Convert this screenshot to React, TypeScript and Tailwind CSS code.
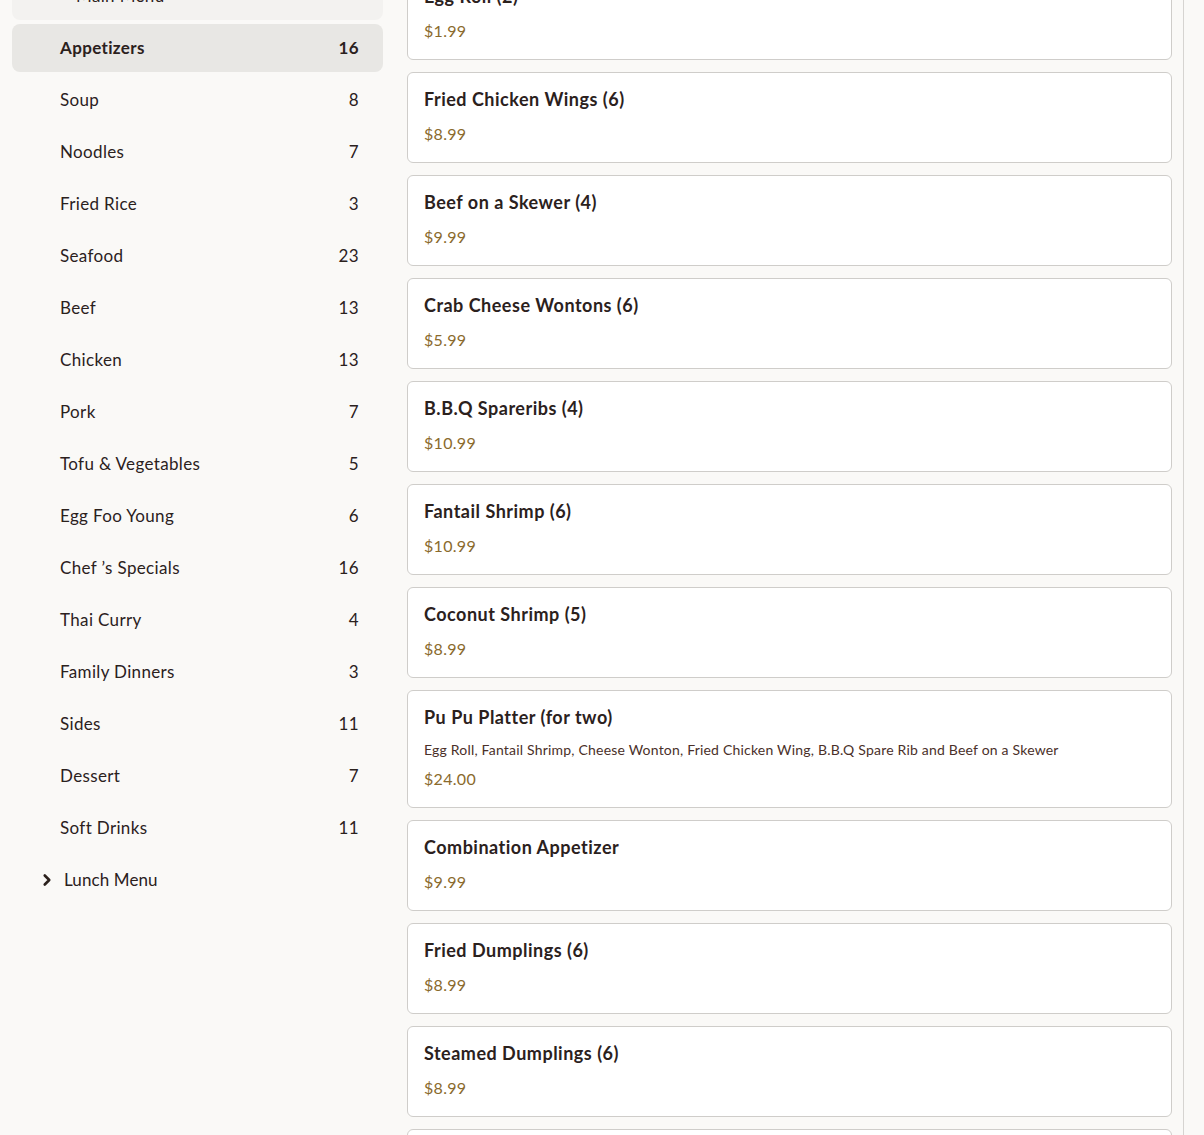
import React from 'react';
import { ChevronDown, ChevronRight } from 'lucide-react';

type Category = { name: string; count: number };
type Item = { name: string; price: string; desc?: string };

const categories: Category[] = [
  { name: 'Appetizers', count: 16 },
  { name: 'Soup', count: 8 },
  { name: 'Noodles', count: 7 },
  { name: 'Fried Rice', count: 3 },
  { name: 'Seafood', count: 23 },
  { name: 'Beef', count: 13 },
  { name: 'Chicken', count: 13 },
  { name: 'Pork', count: 7 },
  { name: 'Tofu & Vegetables', count: 5 },
  { name: 'Egg Foo Young', count: 6 },
  { name: 'Chef ’s Specials', count: 16 },
  { name: 'Thai Curry', count: 4 },
  { name: 'Family Dinners', count: 3 },
  { name: 'Sides', count: 11 },
  { name: 'Dessert', count: 7 },
  { name: 'Soft Drinks', count: 11 },
];

const items: Item[] = [
  { name: 'Egg Roll (2)', price: '$1.99' },
  { name: 'Fried Chicken Wings (6)', price: '$8.99' },
  { name: 'Beef on a Skewer (4)', price: '$9.99' },
  { name: 'Crab Cheese Wontons (6)', price: '$5.99' },
  { name: 'B.B.Q Spareribs (4)', price: '$10.99' },
  { name: 'Fantail Shrimp (6)', price: '$10.99' },
  { name: 'Coconut Shrimp (5)', price: '$8.99' },
  {
    name: 'Pu Pu Platter (for two)',
    price: '$24.00',
    desc: 'Egg Roll, Fantail Shrimp, Cheese Wonton, Fried Chicken Wing, B.B.Q Spare Rib and Beef on a Skewer',
  },
  { name: 'Combination Appetizer', price: '$9.99' },
  { name: 'Fried Dumplings (6)', price: '$8.99' },
  { name: 'Steamed Dumplings (6)', price: '$8.99' },
  { name: 'Vegetable Spring Rolls (2)', price: '$3.99' },
];

const MenuCard: React.FC<{ item: Item }> = ({ item }) => (
  <div className="bg-white border border-[#cfcdca] rounded-md px-4 pt-[14px] pb-4">
    <div className="text-[18px] leading-6 font-bold tracking-[0.5px] text-[#2b211d]">{item.name}</div>
    {item.desc && (
      <div className="mt-[11px] text-[14px] leading-5 tracking-[0.2px] text-[#4a3029]">{item.desc}</div>
    )}
    <div className={`${item.desc ? 'mt-[7px]' : 'mt-[11px]'} text-[16px] leading-6 tracking-[0.3px] text-[#8a6a2c]`}>
      {item.price}
    </div>
  </div>
);

export default function App() {
  return (
    <div
      className="h-[1135px] overflow-hidden bg-[#faf9f7] text-[#2b211d]"
      style={{ fontFamily: 'Lato, "Noto Sans", sans-serif' }}
    >
      <div className="flex -mt-[31px] w-[1184px] border-r border-[#d6d4d1]">
        <aside className="w-[395px] shrink-0 px-3 pt-[3px] flex flex-col gap-1">
          <div className="h-[48px] rounded-lg bg-[#f3f2f0] flex items-center pl-[40px] gap-2 text-[17px] tracking-[0.35px]">
            <ChevronDown size={16} strokeWidth={3} />
            <span>Main Menu</span>
          </div>
          {categories.map((c, i) => (
            <div
              key={c.name}
              className={`h-[48px] rounded-lg flex items-center justify-between pl-12 pr-6 text-[17px] tracking-[0.35px] ${
                i === 0 ? 'bg-[#e8e7e4] font-bold' : ''
              }`}
            >
              <span>{c.name}</span>
              <span>{c.count}</span>
            </div>
          ))}
          <div className="h-[48px] flex items-center pl-[26px] gap-[8px] text-[17px] tracking-[0.1px]">
            <ChevronRight size={18} strokeWidth={3.5} />
            <span>Lunch Menu</span>
          </div>
        </aside>
        <main className="flex-1 pl-3 pr-[11px] flex flex-col gap-3">
          {items.map((it) => (
            <MenuCard key={it.name} item={it} />
          ))}
        </main>
      </div>
    </div>
  );
}
